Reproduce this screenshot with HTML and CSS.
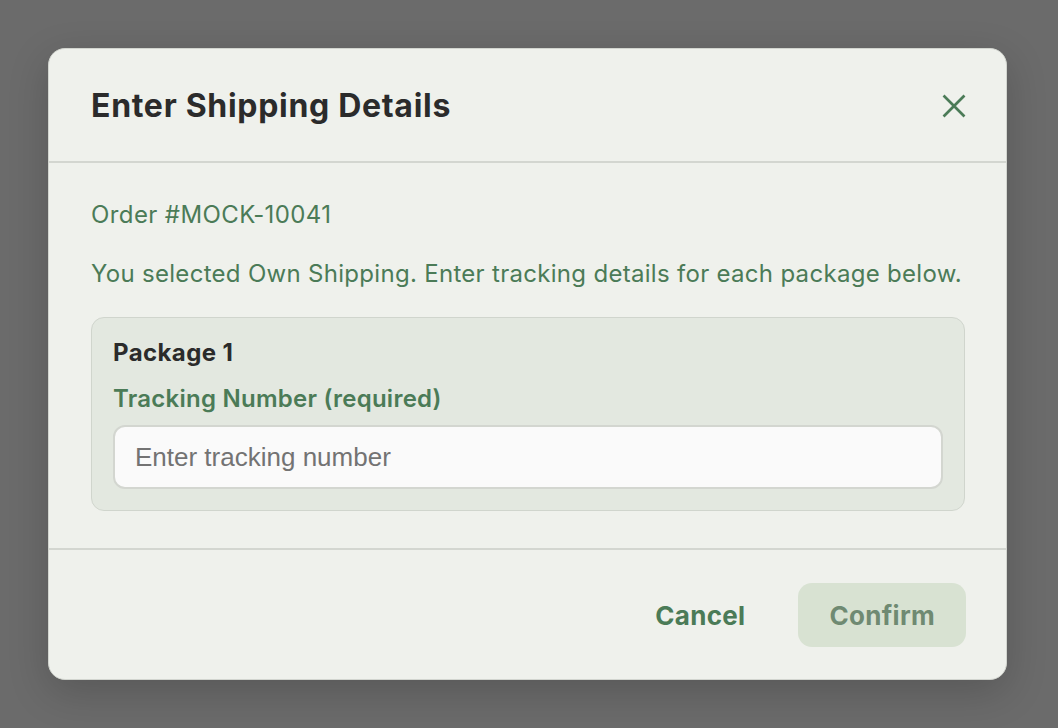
FILE: index.html
```html
<!DOCTYPE html>
<html lang="en">
<head>
<meta charset="utf-8">
<title>Enter Shipping Details</title>
<link rel="stylesheet" href="styles.css">
</head>
<body>
<div class="overlay">
  <div class="modal" role="dialog" aria-labelledby="modal-title">
    <div class="modal-header">
      <h2 id="modal-title" class="modal-title">Enter Shipping Details</h2>
      <button class="close-btn" aria-label="Close">
        <svg width="24" height="24" viewBox="0 0 24 24" fill="none" stroke="currentColor" stroke-width="2.7" stroke-linecap="square">
          <path d="M2.5 2.5 L21.5 21.5 M21.5 2.5 L2.5 21.5"/>
        </svg>
      </button>
    </div>
    <div class="modal-body">
      <p class="order-id">Order #MOCK-10041</p>
      <p class="intro">You selected Own Shipping. Enter tracking details for each package below.</p>
      <div class="package">
        <div class="package-title">Package 1</div>
        <label class="field-label" for="tracking-1">Tracking Number (required)</label>
        <input id="tracking-1" class="text-input" type="text" placeholder="Enter tracking number">
      </div>
    </div>
    <div class="modal-footer">
      <button class="btn btn-ghost">Cancel</button>
      <button class="btn btn-primary" disabled>Confirm</button>
    </div>
  </div>
</div>
</body>
</html>
```
FILE: styles.css
```css
html, body {
  margin: 0;
  padding: 0;
  height: 100%;
}
body {
  background: #6b6b6b;
  font-family: Inter, "Noto Sans", "Liberation Sans", sans-serif;
}
.overlay {
  height: 100%;
  display: flex;
  align-items: center;
  justify-content: flex-start;
  padding-left: 48px;
}
.modal {
  width: 957px;
  background: #eff1ec;
  border: 1px solid #d2d5cf;
  border-radius: 17px;
  box-shadow: 0 12px 40px rgba(0, 0, 0, 0.18);
  overflow: hidden;
}
.modal-header {
  display: flex;
  align-items: center;
  justify-content: space-between;
  padding: 37px 40px 35px 42px;
  border-bottom: 2px solid #d3d6d0;
}
.modal-title {
  margin: 0;
  font-size: 32px;
  line-height: 40px;
  font-weight: 700;
  letter-spacing: 0.7px;
  color: #2b2b2b;
}
.close-btn {
  display: flex;
  align-items: center;
  justify-content: center;
  width: 24px;
  height: 24px;
  padding: 0;
  border: 0;
  background: none;
  color: #4b7b57;
}
.modal-body {
  padding: 37px 41px 37px 42px;
  border-bottom: 2px solid #d3d6d0;
}
.order-id,
.intro {
  margin: 0;
  font-size: 24px;
  line-height: 30px;
  letter-spacing: 0.4px;
  color: #4b7b57;
  white-space: nowrap;
}
.intro {
  margin-top: 29px;
  letter-spacing: 0.3px;
}
.package {
  margin-top: 28px;
  background: #e3e8e0;
  border: 1px solid #d0d5cd;
  border-radius: 13px;
  padding: 20px 21px 21px;
  display: flex;
  flex-direction: column;
}
.package-title {
  font-size: 24px;
  line-height: 30px;
  font-weight: 700;
  letter-spacing: 0.4px;
  color: #2b2b2b;
}
.field-label {
  margin-top: 16px;
  font-size: 24px;
  line-height: 30px;
  font-weight: 600;
  letter-spacing: 0.25px;
  color: #4b7b57;
}
.text-input {
  margin-top: 11px;
  height: 64px;
  box-sizing: border-box;
  border: 2px solid #d3d6d0;
  border-radius: 12px;
  background: #fafafa;
  padding: 0 20px;
  font-family: "Liberation Sans", Arial, sans-serif;
  font-size: 26px;
  color: #2b2b2b;
  outline: none;
}
.text-input::placeholder {
  color: #737373;
}
.modal-footer {
  display: flex;
  justify-content: flex-end;
  align-items: center;
  gap: 22px;
  padding: 33px 40px 32px;
}
.btn {
  height: 64px;
  border: 0;
  border-radius: 14px;
  padding: 0 31px;
  font-family: Inter, "Noto Sans", "Liberation Sans", sans-serif;
  font-size: 26px;
  font-weight: 700;
  letter-spacing: 0.3px;
  background: none;
}
.btn-ghost {
  color: #4b7b57;
}
.btn-primary {
  background: #d8e2d2;
  color: #6f8a72;
}
```
